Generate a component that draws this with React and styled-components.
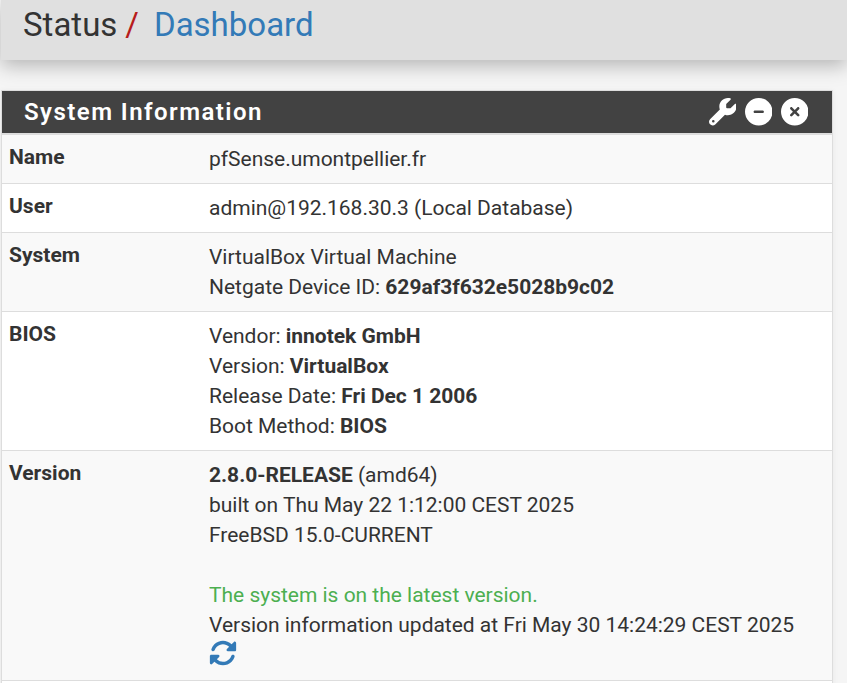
import React from 'react';
import styled, { createGlobalStyle } from 'styled-components';
import { FaWrench, FaCircleMinus, FaCircleXmark, FaRotate } from 'react-icons/fa6';

const GlobalStyle = createGlobalStyle`
  * { box-sizing: border-box; }
  body {
    margin: 0;
    overflow: hidden;
    background: #f5f5f5;
    color: #333;
    font: 21px/30px Roboto, sans-serif;
  }
`;

const Page = styled.div`
  height: 683px;
  overflow: hidden;
  padding-left: 1px;
`;

const Header = styled.header`
  height: 60px;
  padding: 5px 22px 0;
  background: #e0e0e0;
  box-shadow: 0 6px 18px rgba(0, 0, 0, 0.26);
  font-size: 33px;
  line-height: 40px;
  white-space: pre;
`;

const Slash = styled.span`
  color: #b71c1c;
  margin: 0 15px 0 8px;
`;

const Link = styled.a`
  color: #337ab7;
  text-decoration: none;
`;

const Panel = styled.section`
  width: 832px;
  margin-top: 30px;
  border: 1px solid #ddd;
  box-shadow: 0 1px 6px rgba(0, 0, 0, 0.06);
  background: #fff;
`;

const PanelHeading = styled.div`
  display: flex;
  align-items: center;
  justify-content: space-between;
  height: 42px;
  padding: 0 24px 0 22px;
  background: #424242;
  color: #fff;
`;

const PanelTitle = styled.h2`
  margin: 0;
  font-size: 24px;
  font-weight: 600;
  line-height: 42px;
  letter-spacing: 1.45px;
`;

const Actions = styled.div`
  display: flex;
  gap: 8.5px;
  margin-top: -0.5px;

  svg {
    display: block;
    width: 27.5px;
    height: 27.5px;
  }
`;

const Table = styled.div`
  border-top: 2px solid #ddd;
`;

const Row = styled.div`
  display: grid;
  grid-template-columns: 200px 1fr;
  padding: 9px 7px ${(p) => p.$bottom || 9}px;
  border-bottom: 1px solid #ddd;
  background: ${(p) => (p.$striped ? '#f9f9f9' : '#fff')};
`;

const Label = styled.div`
  margin-top: -2px;
  font-weight: 700;
`;

const Value = styled.div`
  white-space: nowrap;
  letter-spacing: -0.015px;
  b { font-weight: 700; }
`;

const Line = styled.div`
  height: 30px;
  color: ${(p) => (p.$success ? '#4caf50' : 'inherit')};
`;

const RefreshLine = styled(Line)`
  display: flex;
  align-items: flex-start;
`;

const Refresh = styled(FaRotate)`
  width: 28px;
  height: 28px;
  margin-top: -1px;
  color: #337ab7;
`;

export default function App() {
  return (
    <Page>
      <GlobalStyle />
      <Header>
        Status<Slash>/</Slash><Link>Dashboard</Link>
      </Header>
      <Panel>
        <PanelHeading>
          <PanelTitle>System Information</PanelTitle>
          <Actions>
            <FaWrench />
            <FaCircleMinus />
            <FaCircleXmark />
          </Actions>
        </PanelHeading>
        <Table>
          <Row $striped>
            <Label>Name</Label>
            <Value>pfSense.umontpellier.fr</Value>
          </Row>
          <Row>
            <Label>User</Label>
            <Value>admin@192.168.30.3 (Local Database)</Value>
          </Row>
          <Row $striped>
            <Label>System</Label>
            <Value>
              <Line>VirtualBox Virtual Machine</Line>
              <Line>Netgate Device ID: <b>629af3f632e5028b9c02</b></Line>
            </Value>
          </Row>
          <Row>
            <Label>BIOS</Label>
            <Value>
              <Line>Vendor: <b>innotek GmbH</b></Line>
              <Line>Version: <b>VirtualBox</b></Line>
              <Line>Release Date: <b>Fri Dec 1 2006</b></Line>
              <Line>Boot Method: <b>BIOS</b></Line>
            </Value>
          </Row>
          <Row $striped $bottom={10}>
            <Label>Version</Label>
            <Value>
              <Line><b>2.8.0-RELEASE</b> (amd64)</Line>
              <Line>built on Thu May 22 1:12:00 CEST 2025</Line>
              <Line>FreeBSD 15.0-CURRENT</Line>
              <Line />
              <Line $success>The system is on the latest version.</Line>
              <Line>Version information updated at Fri May 30 14:24:29 CEST 2025</Line>
              <RefreshLine><Refresh /></RefreshLine>
            </Value>
          </Row>
          <Row />
        </Table>
      </Panel>
    </Page>
  );
}
